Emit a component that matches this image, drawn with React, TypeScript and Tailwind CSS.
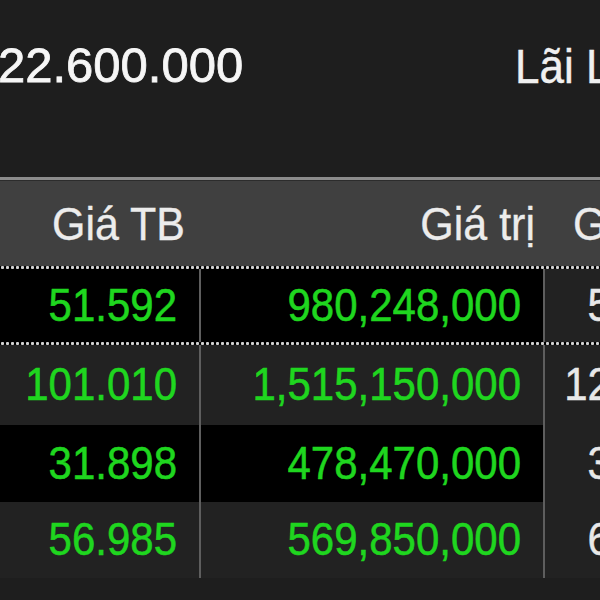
const rows = [
  { avg: "51.592", value: "980,248,000", price: "52.400", bg: "bg-black", h: "h-[73px]" },
  { avg: "101.010", value: "1,515,150,000", price: "121.500", bg: "bg-[#222222]", h: "h-[80px]" },
  { avg: "31.898", value: "478,470,000", price: "33.150", bg: "bg-black", h: "h-[77px]" },
  { avg: "56.985", value: "569,850,000", price: "60.200", bg: "bg-[#222222]", h: "h-[76px]" },
];

const Dots = () => (
  <div className="h-[3px] w-full bg-black bg-[radial-gradient(circle,#d2d2d2_1.3px,transparent_1.8px)] bg-[length:5px_3px]" />
);

export default function App() {
  return (
    <div className="w-[600px] h-[600px] overflow-hidden bg-[#1e1e1e] font-['Liberation_Sans',Arial,sans-serif]">
      {/* summary line */}
      <div className="h-[177px] flex items-start pt-[41px] leading-none whitespace-nowrap">
        <span className="w-[517px] shrink-0 -ml-[2px] text-[49px] text-[#f6f6f6] [-webkit-text-stroke:0.8px_#f6f6f6]">22.600.000</span>
        <span className="shrink-0 text-[44px] text-[#f0f0f0] mt-[4px] inline-block scale-y-[1.08] [-webkit-text-stroke:0.4px_#f0f0f0]">Lãi Lỗ</span>
      </div>

      <div className="h-[3px] bg-[#8c8c8c]" />
      <div className="h-[1px] bg-[#2c2c2c]" />

      {/* header */}
      <div className="h-[85px] bg-[#404040] flex items-center whitespace-nowrap text-[43px] text-[#ececec] pt-[2px] [-webkit-text-stroke:0.3px_#ececec]">
        <div className="w-[200px] shrink-0 text-right pr-[15px]">
          <span className="inline-block scale-y-[1.06]">Giá TB</span>
        </div>
        <div className="w-[343px] shrink-0 text-right pr-[8px]">
          <span className="inline-block scale-y-[1.06]">Giá trị</span>
        </div>
        <div className="shrink-0 pl-[30px]">
          <span className="inline-block scale-y-[1.06]">Giá hiện tại</span>
        </div>
      </div>

      <Dots />
      {rows.map((r, i) => (
        <div key={i}>
          <div className={`${r.h} flex whitespace-nowrap text-[42px] leading-none`}>
            <div className={`w-[199px] shrink-0 ${r.bg} flex items-center justify-end pr-[22px] text-[#1fd61f] [-webkit-text-stroke:0.5px_#1fd61f]`}>
              <span className="inline-block scale-y-110">{r.avg}</span>
            </div>
            <div className="w-[2px] shrink-0 bg-[#5e5e5e]" />
            <div className={`w-[342px] shrink-0 ${r.bg} flex items-center justify-end pr-[22px] text-[#1fd61f] [-webkit-text-stroke:0.5px_#1fd61f]`}>
              <span className="inline-block scale-y-110">{r.value}</span>
            </div>
            <div className="w-[2px] shrink-0 bg-[#5e5e5e]" />
            <div className="w-[193px] shrink-0 bg-[#222222] flex items-center justify-end pr-[22px] text-[#e8e8e8] [-webkit-text-stroke:0.4px_#e8e8e8]">
              <span className="inline-block scale-y-110">{r.price}</span>
            </div>
          </div>
          {i === 0 && <Dots />}
        </div>
      ))}
    </div>
  );
}
